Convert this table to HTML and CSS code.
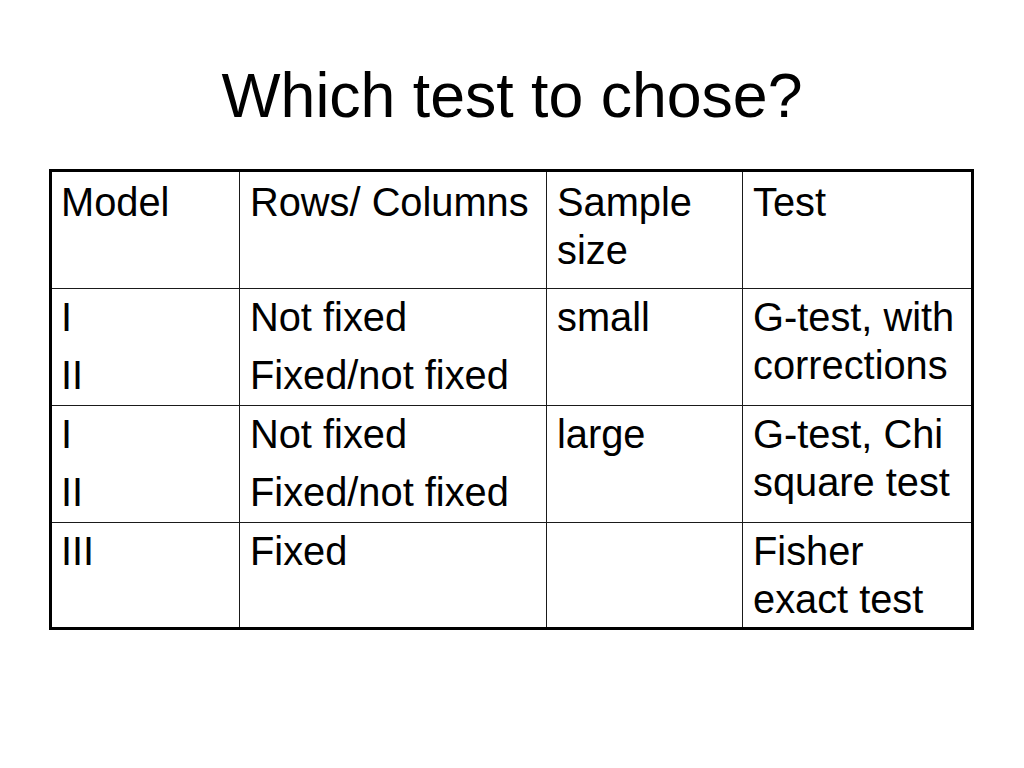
FILE: index.html
```html
<!DOCTYPE html>
<html lang="en">
<head>
<meta charset="utf-8">
<title>Which test to chose?</title>
<link rel="stylesheet" href="styles.css">
</head>
<body>
<main class="slide">
  <h1 class="title">Which test to chose?</h1>
  <table class="grid">
    <colgroup>
      <col class="c1"><col class="c2"><col class="c3"><col class="c4">
    </colgroup>
    <tr class="r-head">
      <td>Model</td>
      <td>Rows/ Columns</td>
      <td>Sample size</td>
      <td class="last">Test</td>
    </tr>
    <tr class="r-pair">
      <td><p>I</p><p class="next">II</p></td>
      <td><p>Not fixed</p><p class="next">Fixed/not fixed</p></td>
      <td>small</td>
      <td class="last">G-test, with corrections</td>
    </tr>
    <tr class="r-pair">
      <td><p>I</p><p class="next">II</p></td>
      <td><p>Not fixed</p><p class="next">Fixed/not fixed</p></td>
      <td>large</td>
      <td class="last">G-test, Chi square test</td>
    </tr>
    <tr class="r-end">
      <td>III</td>
      <td>Fixed</td>
      <td></td>
      <td class="last">Fisher exact test</td>
    </tr>
  </table>
</main>
</body>
</html>
```

FILE: styles.css
```css
html, body {
  margin: 0;
  padding: 0;
  background: #ffffff;
}

.slide {
  width: 1024px;
  height: 768px;
  font-family: "Liberation Sans", Arial, sans-serif;
  color: #000000;
  overflow: hidden;
}

.title {
  margin: 0;
  padding-top: 64px;
  font-size: 62.6px;
  line-height: 63px;
  font-weight: normal;
  text-align: center;
}

.grid {
  margin: 42px 0 0 49px;
  border: 3px solid #000000;
  border-collapse: separate;
  border-spacing: 0;
  table-layout: fixed;
  width: 925px;
  font-size: 39.8px;
  line-height: 48px;
}

.c1 { width: 188px; }
.c2 { width: 307px; }
.c3 { width: 196px; }
.c4 { width: 228px; }

.grid td {
  vertical-align: top;
  padding: 4px 6px 0 10px;
  border-right: 1px solid #1a1a1a;
  border-bottom: 1px solid #1a1a1a;
}

.grid td:first-child {
  padding-left: 9px;
}

.grid td.last {
  border-right: none;
}

.grid p {
  margin: 0;
}

.grid p.next {
  margin-top: 10px;
}

.r-head td {
  padding-top: 6px;
  padding-bottom: 14px;
}

.r-pair td {
  padding-bottom: 6px;
}

.r-end td {
  padding-bottom: 4px;
  border-bottom: none;
}
```
